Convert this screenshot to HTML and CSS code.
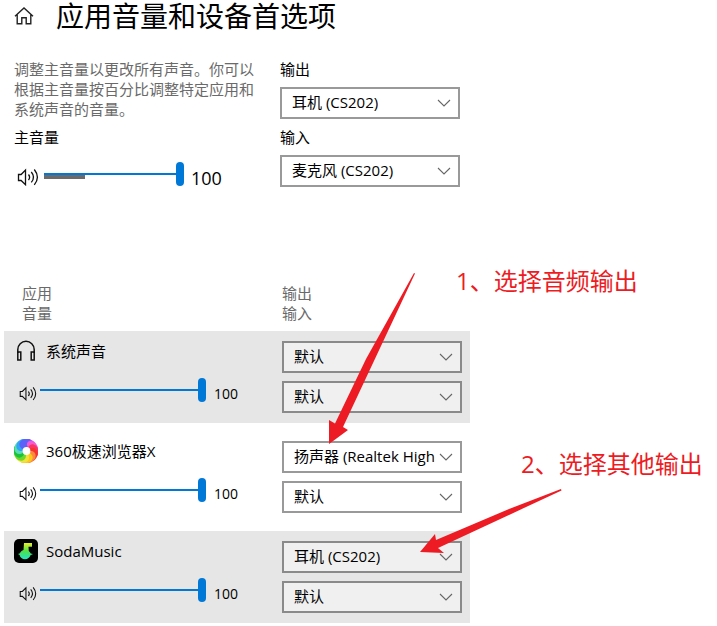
FILE: index.html
```html
<!DOCTYPE html>
<html lang="zh-CN">
<head>
    <meta charset="UTF-8">
    <meta name="viewport" content="width=device-width, initial-scale=1.0">
    <title>应用音量和设备首选项</title>
    <link rel="stylesheet" href="styles.css">
</head>
<body>
    <svg class="sprite" aria-hidden="true">
        <symbol id="chevron" viewBox="0 0 14 8">
            <path d="M1 1l6 6 6-6" fill="none" stroke="#666" stroke-width="1.1"/>
        </symbol>
        <symbol id="speaker" viewBox="0 0 22 18">
            <g fill="none" stroke="#111" stroke-width="1.3">
                <path d="M1.5 6.5h2.6l4.4-4.4v14.6l-4.4-4.2H1.5z"/>
                <path d="M11.5 6.5q2.2 2.8 0 5.6"/>
                <path d="M14.3 4q4.4 5.2 0 10.4"/>
                <path d="M17.3 1.5q6.2 7.8 0 15.4"/>
            </g>
        </symbol>
    </svg>

    <header class="page-header">
        <a href="#" class="home" aria-label="主页">
            <svg viewBox="0 0 20 20" fill="none" stroke="#222" stroke-width="1.4">
                <path d="M1 10.2L10 2l9 8.2M3.2 8.5v9.3h4.6v-6h4.4v6h4.6V8.5"/>
            </svg>
        </a>
        <h1>应用音量和设备首选项</h1>
    </header>

    <main>
        <section class="master">
            <div class="master-volume">
                <p class="desc">调整主音量以更改所有声音。你可以根据主音量按百分比调整特定应用和系统声音的音量。</p>
                <label for="masterRange">主音量</label>
                <div class="slider">
                    <svg class="speaker"><use href="#speaker"/></svg>
                    <div class="track">
                        <div class="level" style="width:41px"></div>
                        <input type="range" id="masterRange" min="0" max="100" value="100">
                    </div>
                    <output for="masterRange">100</output>
                </div>
            </div>
            <div class="master-devices">
                <label for="masterOut">输出</label>
                <div class="select">
                    <select id="masterOut"><option>耳机 (CS202)</option></select>
                    <svg><use href="#chevron"/></svg>
                </div>
                <label for="masterIn">输入</label>
                <div class="select">
                    <select id="masterIn"><option>麦克风 (CS202)</option></select>
                    <svg><use href="#chevron"/></svg>
                </div>
            </div>
        </section>

        <section class="apps">
            <div class="apps-head">
                <div>应用<br>音量</div>
                <div>输出<br>输入</div>
            </div>

            <article class="app shaded">
                <div class="app-volume">
                    <div class="app-name">
                        <svg class="app-icon" viewBox="0 0 24 24" fill="none" stroke="#111" stroke-width="1.5">
                            <path d="M3.8 14v-3.500a8.200 8.200 0 0 1 16.400 0V14"/>
                            <path d="M3.800 13h3v8h-3zM17.200 13h3v8h-3z"/>
                        </svg>
                        <label for="sysRange">系统声音</label>
                    </div>
                    <div class="slider">
                        <svg class="speaker"><use href="#speaker"/></svg>
                        <div class="track"><input type="range" id="sysRange" min="0" max="100" value="100"></div>
                        <output for="sysRange">100</output>
                    </div>
                </div>
                <div class="app-devices">
                    <div class="select">
                        <select aria-label="系统声音 输出"><option>默认</option></select>
                        <svg><use href="#chevron"/></svg>
                    </div>
                    <div class="select">
                        <select aria-label="系统声音 输入"><option>默认</option></select>
                        <svg><use href="#chevron"/></svg>
                    </div>
                </div>
            </article>

            <article class="app">
                <div class="app-volume">
                    <div class="app-name">
                        <svg class="app-icon" viewBox="0 0 24 24">
                            <defs>
                                <path id="petal" d="M10.500 9C7.500 5.500 9 1 14 .4C18.500 .4 21.500 3 22.500 6C18.500 3.600 15 5.500 15.500 10z"/>
                            </defs>
                            <use href="#petal" fill="#e64df5"/>
                            <use href="#petal" fill="#f55ad0" transform="rotate(30 12 12)"/>
                            <use href="#petal" fill="#fa3560" transform="rotate(60 12 12)"/>
                            <use href="#petal" fill="#f5342c" transform="rotate(90 12 12)"/>
                            <use href="#petal" fill="#fb8a40" transform="rotate(120 12 12)"/>
                            <use href="#petal" fill="#fdc81c" transform="rotate(150 12 12)"/>
                            <use href="#petal" fill="#f0e43c" transform="rotate(180 12 12)"/>
                            <use href="#petal" fill="#6fd82a" transform="rotate(210 12 12)"/>
                            <use href="#petal" fill="#17c43c" transform="rotate(240 12 12)"/>
                            <use href="#petal" fill="#5cdcb0" transform="rotate(270 12 12)"/>
                            <use href="#petal" fill="#2fa5fa" transform="rotate(300 12 12)"/>
                            <use href="#petal" fill="#5a62f8" transform="rotate(330 12 12)"/>
                            <circle cx="12.500" cy="12" r="3.900" fill="#fff"/>
                        </svg>
                        <label for="browserRange">360极速浏览器X</label>
                    </div>
                    <div class="slider">
                        <svg class="speaker"><use href="#speaker"/></svg>
                        <div class="track"><input type="range" id="browserRange" min="0" max="100" value="100"></div>
                        <output for="browserRange">100</output>
                    </div>
                </div>
                <div class="app-devices">
                    <div class="select">
                        <select aria-label="360极速浏览器X 输出"><option>扬声器 (Realtek High Definition Audio)</option></select>
                        <svg><use href="#chevron"/></svg>
                    </div>
                    <div class="select">
                        <select aria-label="360极速浏览器X 输入"><option>默认</option></select>
                        <svg><use href="#chevron"/></svg>
                    </div>
                </div>
            </article>

            <article class="app shaded">
                <div class="app-volume">
                    <div class="app-name">
                        <svg class="app-icon" viewBox="0 0 24 24">
                            <defs>
                                <linearGradient id="soda" x1="0" y1="0" x2="0" y2="1">
                                    <stop offset="0" stop-color="#e6ee2c"/>
                                    <stop offset=".5" stop-color="#4fe04a"/>
                                    <stop offset="1" stop-color="#1fe5c8"/>
                                </linearGradient>
                            </defs>
                            <rect width="24" height="24" rx="5" fill="#000"/>
                            <path d="M10 4h8v3.800h-3.500l.3 4.200c1 .7 1.600 1.500 1.900 2.500l2.300.6-2.500 1.200c-.6 2.300-2.800 4-5.500 4s-5-1.700-5.400-4.200L4 15l1.900-.8c.5-1.500 2-2.700 3.600-3.200z" fill="url(#soda)"/>
                        </svg>
                        <label for="sodaRange">SodaMusic</label>
                    </div>
                    <div class="slider">
                        <svg class="speaker"><use href="#speaker"/></svg>
                        <div class="track"><input type="range" id="sodaRange" min="0" max="100" value="100"></div>
                        <output for="sodaRange">100</output>
                    </div>
                </div>
                <div class="app-devices">
                    <div class="select">
                        <select aria-label="SodaMusic 输出"><option>耳机 (CS202)</option></select>
                        <svg><use href="#chevron"/></svg>
                    </div>
                    <div class="select">
                        <select aria-label="SodaMusic 输入"><option>默认</option></select>
                        <svg><use href="#chevron"/></svg>
                    </div>
                </div>
            </article>
        </section>
    </main>

    <!-- 标注 -->
    <svg class="arrows" width="717" height="626" aria-hidden="true">
        <path d="M414 273l1 .5L343 427l5 3-19 14V420l6 3.500L366 359z"/>
        <path d="M561 489l.5 1.500L438 548l6 5-24-1 15-18 1 6L509 509z"/>
    </svg>
    <p class="note note-1">1、选择音频输出</p>
    <p class="note note-2">2、选择其他输出</p>
</body>
</html>
```
FILE: styles.css
```css
*{margin:0;padding:0;box-sizing:border-box}
body{position:relative;font-family:'Open Sans','Noto Sans CJK SC',sans-serif;font-size:15px;line-height:20px;background:#fff;color:#000}
.sprite{position:absolute;width:0;height:0}

.page-header{display:flex;align-items:center;height:31px;padding-left:14px}
.home{display:flex;width:20px;height:20px}
.home svg{width:20px;height:20px}
h1{margin-left:22px;font-size:28px;line-height:30px;font-weight:400}

main{max-width:470px;padding-left:4px}

.master{display:grid;grid-template-columns:1fr 180px;padding:28px 10px 0}
.master label{display:block}
.desc{max-width:240px;margin-bottom:8px;color:#6a6a6a}
.master-devices .select{margin:8px 0}

.slider{display:flex;align-items:center}
.speaker{width:18px;height:15px;margin-top:6px}
.track{position:relative;display:flex;width:166px}
.slider output{margin:7px 0 0 8px;font-size:14px}
.master .slider{margin-top:13px;padding-left:3px;height:28px}
.master .speaker{width:22px;height:18px}
.master .track{width:140px;margin-left:5px}
.master .slider output{margin-left:7px;font-size:18px}
.level{position:absolute;top:13px;left:0;height:4px;background:#6b6b6b}

input[type=range]{-webkit-appearance:none;appearance:none;position:relative;display:block;width:100%;height:24px;background:linear-gradient(#0078d7,#0078d7) center/100% 2px no-repeat;cursor:pointer}
input[type=range]::-webkit-slider-thumb{-webkit-appearance:none;width:8px;height:24px;border-radius:4px;background:#0078d7}
input[type=range]::-moz-range-thumb{width:8px;height:24px;border:none;border-radius:4px;background:#0078d7}

.select{position:relative}
.select select{-webkit-appearance:none;appearance:none;display:block;width:100%;height:32px;padding:0 25px 2px 10px;border:2px solid #999;border-radius:0;background:#fff;color:#000;font:inherit}
.select svg{position:absolute;top:12px;right:9px;width:14px;height:8px;pointer-events:none}

.apps{margin-top:88px}
.apps-head{display:grid;grid-template-columns:1fr 188px;padding-left:18px;margin-bottom:8px;color:#6a6a6a}
.app{display:grid;grid-template-columns:1fr 180px;margin-bottom:8px;padding:0 8px 10px 10px}
.shaded{background:#e6e6e6}
.shaded select{border-color:#8a8a8a;background:#f0f0f0}
.app-volume{padding-top:8px}
.app-name{display:flex;align-items:center;gap:8px}
.app-icon{width:24px;height:24px}
.app .slider{margin-top:13px;padding-left:5px;height:28px}
.app .track{margin-left:3px}
.app-devices{display:flex;flex-direction:column;gap:8px;padding-top:10px}

.arrows{position:absolute;top:0;left:0;fill:#ed1c24;pointer-events:none}
.note{position:absolute;color:#ed1c24;font-size:24px;line-height:32px;white-space:nowrap}
.note-1{top:265px;left:456px}
.note-2{top:448px;left:521px}
```
